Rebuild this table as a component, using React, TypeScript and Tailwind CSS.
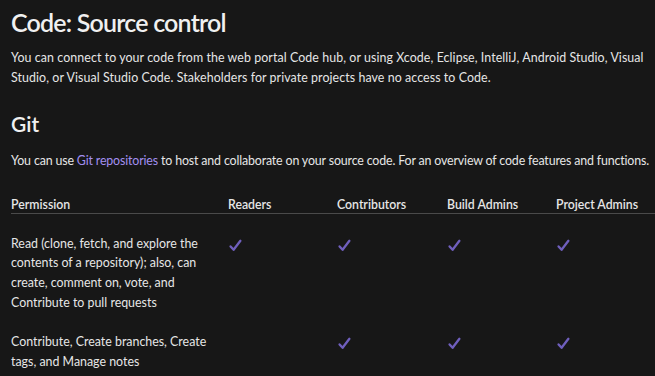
import React from "react";

const Check = () => (
  <svg width="13" height="13" viewBox="0 0 13 13" className="block">
    <path d="M1.6 7.4 L4.6 10.8 L11.4 1.8" fill="none" stroke="#6f5fbd" strokeWidth="2.3" strokeLinecap="round" strokeLinejoin="round" />
  </svg>
);

export default function App() {
  const rows = [
    {
      lines: ["Read (clone, fetch, and explore the", "contents of a repository); also, can", "create, comment on, vote, and", "Contribute to pull requests"],
      checks: [true, true, true, true],
    },
    {
      lines: ["Contribute, Create branches, Create", "tags, and Manage notes"],
      checks: [false, true, true, true],
    },
  ];
  return (
    <div
      className="w-[655px] h-[376px] overflow-hidden bg-[#171717] text-[#e6e6e6] pl-[11px]"
      style={{ fontFamily: '"Lato", "Open Sans", sans-serif' }}
    >
      <h1 className="text-[25px] font-semibold leading-[36px] pt-[4px] text-[#f0f0f0] tracking-[-0.8px]">Code: Source control</h1>
      <p className="text-[12.4px] leading-[19.5px] mt-[8px] w-[640px] tracking-[0.08px]">
        You can connect to your code from the web portal Code hub, or using Xcode, Eclipse, IntelliJ, Android Studio, Visual Studio, or Visual Studio Code. Stakeholders for private projects have no access to Code.
      </p>
      <h2 className="text-[21px] font-semibold leading-[30px] mt-[22px] text-[#f0f0f0]">Git</h2>
      <p className="text-[12.4px] leading-[19.5px] mt-[12px] whitespace-nowrap tracking-[-0.15px]">
        You can use <span className="text-[#a28ff0]">Git repositories</span> to host and collaborate on your source code. For an overview of code features and functions.
      </p>
      <div className="mt-[26px] w-[700px]">
        <div className="flex text-[12.3px] font-semibold leading-[16px] border-b border-[#4a4a4a]">
          <div className="w-[217px]">Permission</div>
          <div className="w-[109px]">Readers</div>
          <div className="w-[110px]">Contributors</div>
          <div className="w-[109px]">Build Admins</div>
          <div className="w-[120px]">Project Admins</div>
        </div>
        <div className="pt-[10px]">
          {rows.map((r, i) => (
            <div key={i} className="flex text-[12.4px] leading-[19.7px] py-[10px]">
              <div className="w-[217px]">
                {r.lines.map((l, k) => (
                  <div key={k}>{l}</div>
                ))}
              </div>
              {r.checks.map((c, j) => (
                <div key={j} className={j === 1 ? "w-[110px] pt-[5px] pl-[1px]" : "w-[109px] pt-[5px] pl-[1px]"}>
                  {c ? <Check /> : null}
                </div>
              ))}
            </div>
          ))}
        </div>
      </div>
    </div>
  );
}
